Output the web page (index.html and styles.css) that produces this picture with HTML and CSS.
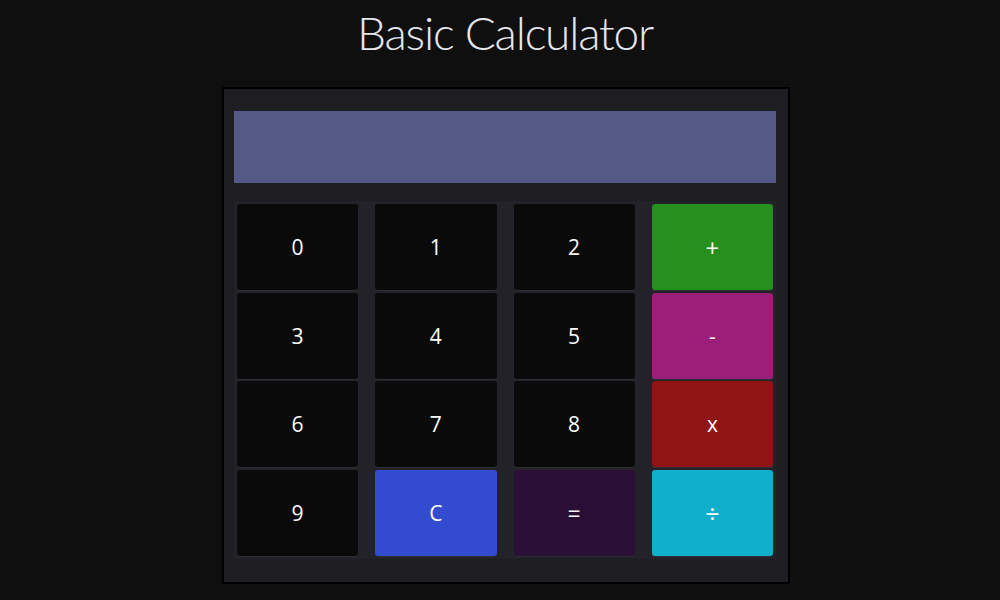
FILE: index.html
```html
<!DOCTYPE html>
<html lang="en">
<head>
<meta charset="utf-8">
<title>Basic Calculator</title>
<link rel="stylesheet" href="styles.css">
</head>
<body>
<h1 class="title">Basic Calculator</h1>
<div class="calc">
  <div class="display"></div>
  <div class="keys">
    <button class="key">0</button>
    <button class="key">1</button>
    <button class="key">2</button>
    <button class="key op-add">+</button>
    <button class="key">3</button>
    <button class="key">4</button>
    <button class="key">5</button>
    <button class="key op-sub">-</button>
    <button class="key">6</button>
    <button class="key">7</button>
    <button class="key">8</button>
    <button class="key op-mul">x</button>
    <button class="key">9</button>
    <button class="key op-clear">C</button>
    <button class="key op-eq">=</button>
    <button class="key op-div">÷</button>
  </div>
</div>
</body>
</html>
```
FILE: styles.css
```css
html, body {
  margin: 0;
  padding: 0;
  background: #0f0f0f;
}
body {
  font-family: "Open Sans", "DejaVu Sans", sans-serif;
  color: #fff;
  display: flex;
  flex-direction: column;
  align-items: center;
}
.title {
  margin: 0 0 0 10px;
  height: 87px;
  font-family: Lato, "Open Sans", sans-serif;
  font-weight: 300;
  font-size: 46px;
  letter-spacing: -1.2px;
  line-height: 66px;
  color: #e6e6ee;
}
.calc {
  width: 542px;
  margin-left: 12px;
  background: #1d1d22;
  border: 2px solid #000;
  padding: 22px 12px 23px 10px;
}
.display {
  height: 72px;
  background: #545a85;
}
.keys {
  margin-top: 18px;
  background: #222228;
  padding: 3px;
  display: grid;
  grid-template-columns: repeat(4, 1fr);
  grid-auto-rows: 86px;
  column-gap: 17px;
  row-gap: 2.5px;
}
.key {
  border: none;
  border-radius: 3px;
  background: #0a0a0a;
  color: #fff;
  font-family: "Open Sans", "DejaVu Sans", sans-serif;
  font-size: 21px;
  box-shadow: 0 1px 0 #2e2e34;
  padding: 0;
}
.op-add { background: #26901f; font-size: 24px; }
.op-sub { background: #9b1f79; }
.op-mul { background: #8f1515; }
.op-div { background: #10b0cc; font-size: 25px; }
.op-clear { background: #334bcf; }
.op-eq { background: #2a0f36; font-size: 23px; }
```
